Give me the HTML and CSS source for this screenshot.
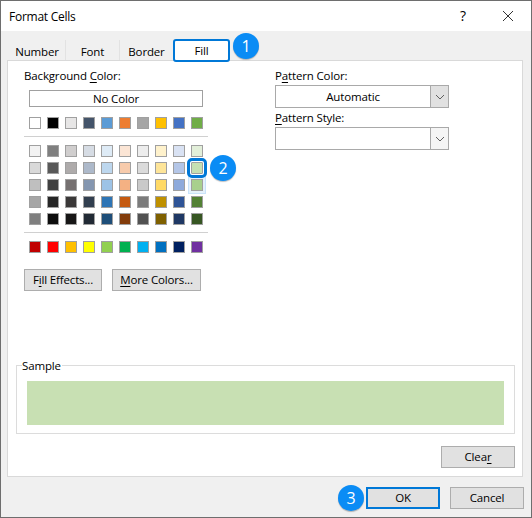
FILE: index.html
```html
<html>
<head>
    <title>Format Cells</title>
    <link rel="stylesheet" href="styles.css">
</head>
<body>
    <div class="dialog">
        <div class="titlebar">
            <div class="title">Format Cells</div>
            <div class="help">?</div>
            <svg class="close" width="12" height="12" viewBox="0 0 12 12"><path d="M1 1L11 11M11 1L1 11" stroke="#333" stroke-width="1" fill="none"/></svg>
        </div>
        <div class="tabs">
            <div class="tab tab-number">Number</div>
            <div class="tab tab-font">Font</div>
            <div class="tab tab-border">Border</div>
            <div class="tab tab-active">Fill</div>
        </div>
        <div class="panel">
            <div class="columns">
                <div class="left">
                    <div class="label">Background <u>C</u>olor:</div>
                    <div class="no-color">No Color</div>
                    <div class="swatches theme">
                        <span class="c-ffffff"></span><span class="c-000000"></span><span class="c-e7e6e6"></span><span class="c-44546a"></span><span class="c-5b9bd5"></span><span class="c-ed7d31"></span><span class="c-a5a5a5"></span><span class="c-ffc000"></span><span class="c-4472c4"></span><span class="c-70ad47"></span>
                    </div>
                    <div class="divider"></div>
                    <div class="swatches tints">
                        <span class="c-f2f2f2"></span><span class="c-7f7f7f"></span><span class="c-d0cece"></span><span class="c-d6dce4"></span><span class="c-deebf6"></span><span class="c-fbe5d5"></span><span class="c-ededed"></span><span class="c-fff2cc"></span><span class="c-d9e2f3"></span><span class="c-e2efd9"></span>
                        <span class="c-d9d9d9"></span><span class="c-595959"></span><span class="c-aeabab"></span><span class="c-adb9ca"></span><span class="c-bdd7ee"></span><span class="c-f7cbac"></span><span class="c-dbdbdb"></span><span class="c-fee599"></span><span class="c-b4c6e7"></span><span class="c-c5e0b3 selected"></span>
                        <span class="c-bfbfbf"></span><span class="c-404040"></span><span class="c-757070"></span><span class="c-8496b0"></span><span class="c-9dc3e6"></span><span class="c-f4b183"></span><span class="c-c9c9c9"></span><span class="c-ffd965"></span><span class="c-8eaadb"></span><span class="c-a8d08d hovered"></span>
                        <span class="c-a6a6a6"></span><span class="c-262626"></span><span class="c-3a3838"></span><span class="c-323f4f"></span><span class="c-2e75b5"></span><span class="c-c55a11"></span><span class="c-7b7b7b"></span><span class="c-bf9000"></span><span class="c-2f5496"></span><span class="c-538135"></span>
                        <span class="c-7f7f7f"></span><span class="c-0d0d0d"></span><span class="c-171616"></span><span class="c-222a35"></span><span class="c-1e4e79"></span><span class="c-833c0b"></span><span class="c-525252"></span><span class="c-7f6000"></span><span class="c-1f3864"></span><span class="c-375623"></span>
                    </div>
                    <div class="divider"></div>
                    <div class="swatches standard">
                        <span class="c-c00000"></span><span class="c-ff0000"></span><span class="c-ffc000"></span><span class="c-ffff00"></span><span class="c-92d050"></span><span class="c-00b050"></span><span class="c-00b0f0"></span><span class="c-0070c0"></span><span class="c-002060"></span><span class="c-7030a0"></span>
                    </div>
                    <div class="left-buttons">
                        <div class="button button-effects">F<u>i</u>ll Effects...</div>
                        <div class="button button-more"><u>M</u>ore Colors...</div>
                    </div>
                </div>
                <div class="right">
                    <div class="label">P<u>a</u>ttern Color:</div>
                    <div class="select">
                        <div class="select-value">Automatic</div>
                        <div class="select-arrow"><svg width="10" height="6" viewBox="0 0 10 6"><path d="M1 1L5 5L9 1" stroke="#606060" fill="none"/></svg></div>
                    </div>
                    <div class="label label-style"><u>P</u>attern Style:</div>
                    <div class="select">
                        <div class="select-value"></div>
                        <div class="select-arrow select-arrow-light"><svg width="10" height="6" viewBox="0 0 10 6"><path d="M1 1L5 5L9 1" stroke="#606060" fill="none"/></svg></div>
                    </div>
                </div>
            </div>
            <div class="sample">
                <div class="sample-label">Sample</div>
                <div class="sample-color"></div>
            </div>
            <div class="clear-row">
                <div class="button button-action">Clea<u>r</u></div>
            </div>
        </div>
        <div class="footer">
            <div class="button button-action button-ok">OK</div>
            <div class="button button-action">Cancel</div>
        </div>
        <div class="badge badge-1">1</div>
        <div class="badge badge-2">2</div>
        <div class="badge badge-3">3</div>
    </div>
</body>
</html>
```

FILE: styles.css
```css
body {
    margin: 0;
    padding: 0;
    font-family: "Open Sans", "Noto Sans", Arial, sans-serif;
    font-size: 11.5px;
    letter-spacing: -0.15px;
    color: #000;
}
u {
    text-underline-offset: 2px;
}
.dialog {
    position: relative;
    width: 532px;
    height: 518px;
    box-sizing: border-box;
    border: 1px solid #6e6e6e;
    background-color: #f0f0f0;
    display: flex;
    flex-direction: column;
}
.titlebar {
    height: 30px;
    background-color: #ffffff;
    display: flex;
    align-items: center;
    padding-left: 8px;
}
.title {
    font-size: 12px;
    letter-spacing: -0.25px;
    flex: 1;
}
.help {
    font-size: 14px;
    margin-right: 36px;
    margin-top: -2px;
}
.close {
    margin-right: 17px;
}
.tabs {
    display: flex;
    height: 20px;
    margin-top: 9px;
    padding-left: 8px;
}
.tab {
    box-sizing: border-box;
    display: flex;
    justify-content: center;
    align-items: center;
    border-right: 1px solid #e2e2e2;
    padding-top: 2px;
}
.tab-number {
    width: 57px;
}
.tab-font {
    width: 54px;
}
.tab-border {
    width: 53px;
    border-right: none;
}
.tab-active {
    width: 57px;
    height: 23px;
    margin-top: -1px;
    position: relative;
    z-index: 1;
    background-color: #ffffff;
    border: 2px solid #0078d7;
    border-radius: 3px;
    padding-top: 0;
    padding-bottom: 1px;
}
.panel {
    height: 417px;
    box-sizing: border-box;
    margin: 0 8px 0 6px;
    border: 1px solid #d9d9d9;
    background-color: #ffffff;
    padding: 0 7px 0 8px;
}
.columns {
    display: flex;
    height: 304px;
    padding-left: 8px;
}
.left {
    width: 251px;
    padding-top: 8px;
}
.label {
    height: 16px;
    line-height: 14px;
}
.no-color {
    width: 172px;
    height: 15px;
    line-height: 15px;
    margin: 5px 0 0 5px;
    border: 1px solid #a0a0a0;
    text-align: center;
}
.swatches {
    display: grid;
    grid-template-columns: repeat(10, 12px);
    column-gap: 6px;
    row-gap: 5px;
    margin-left: 5px;
}
.swatches span {
    box-sizing: border-box;
    width: 12px;
    height: 12px;
    border: 1px solid #a0a0a0;
}
.theme {
    margin-top: 10px;
}
.tints {
    margin-top: 8px;
}
.standard {
    margin-top: 8px;
}
.divider {
    width: 184px;
    height: 1px;
    background-color: #d0d0d0;
    margin-top: 7px;
}
.swatches .selected {
    position: relative;
    z-index: 1;
    outline: 3px solid #0078d7;
    outline-offset: 1px;
    border-radius: 1px;
}
.swatches .hovered {
    box-shadow: 0 0 0 2px #e5f1fb, 0 0 0 3px #c9e3fa;
}
.left-buttons {
    display: flex;
    gap: 10px;
    margin-top: 16px;
}
.button {
    box-sizing: border-box;
    height: 22px;
    display: flex;
    justify-content: center;
    align-items: center;
    background-color: #e1e1e1;
    border: 1px solid #adadad;
    padding-bottom: 1px;
}
.button-effects {
    width: 78px;
}
.button-more {
    width: 89px;
}
.right {
    width: 174px;
    padding-top: 8px;
}
.label-style {
    margin-top: 3px;
}
.select {
    box-sizing: border-box;
    height: 23px;
    display: flex;
    border: 1px solid #a9a9a9;
}
.select-value {
    flex: 1;
    text-align: center;
    line-height: 21px;
}
.select-arrow {
    width: 17px;
    display: flex;
    justify-content: center;
    align-items: center;
    background-color: #e1e1e1;
    border-left: 1px solid #a9a9a9;
}
.select-arrow-light {
    background-color: #f5f5f5;
}
.sample {
    position: relative;
    box-sizing: border-box;
    height: 69px;
    border: 1px solid #dcdcdc;
    padding: 15px 10px 0 10px;
}
.sample-label {
    position: absolute;
    top: -8px;
    left: 5px;
    padding-right: 1px;
    background-color: #ffffff;
}
.sample-color {
    height: 44px;
    background-color: #c8e0b3;
}
.clear-row {
    display: flex;
    justify-content: flex-end;
    margin-top: 12px;
}
.button-action {
    width: 74px;
}
.footer {
    display: flex;
    justify-content: flex-end;
    gap: 10px;
    padding: 10px 7px 0 0;
}
.button-ok {
    border: 2px solid #0078d7;
}
.badge {
    position: absolute;
    width: 26px;
    height: 26px;
    border-radius: 50%;
    background-color: #0a8cf5;
    box-shadow: 0 1px 1px rgba(0, 0, 0, 0.25);
    color: #ffffff;
    font-size: 16px;
    line-height: 26px;
    text-align: center;
    z-index: 2;
}
.badge-1 {
    left: 232px;
    top: 32px;
}
.badge-2 {
    left: 209px;
    top: 154px;
}
.badge-3 {
    left: 337px;
    top: 484px;
}
.c-ffffff { background-color: #ffffff; }
.c-000000 { background-color: #000000; }
.c-e7e6e6 { background-color: #e7e6e6; }
.c-44546a { background-color: #44546a; }
.c-5b9bd5 { background-color: #5b9bd5; }
.c-ed7d31 { background-color: #ed7d31; }
.c-a5a5a5 { background-color: #a5a5a5; }
.c-ffc000 { background-color: #ffc000; }
.c-4472c4 { background-color: #4472c4; }
.c-70ad47 { background-color: #70ad47; }
.c-f2f2f2 { background-color: #f2f2f2; }
.c-7f7f7f { background-color: #7f7f7f; }
.c-d0cece { background-color: #d0cece; }
.c-d6dce4 { background-color: #d6dce4; }
.c-deebf6 { background-color: #deebf6; }
.c-fbe5d5 { background-color: #fbe5d5; }
.c-ededed { background-color: #ededed; }
.c-fff2cc { background-color: #fff2cc; }
.c-d9e2f3 { background-color: #d9e2f3; }
.c-e2efd9 { background-color: #e2efd9; }
.c-d9d9d9 { background-color: #d9d9d9; }
.c-595959 { background-color: #595959; }
.c-aeabab { background-color: #aeabab; }
.c-adb9ca { background-color: #adb9ca; }
.c-bdd7ee { background-color: #bdd7ee; }
.c-f7cbac { background-color: #f7cbac; }
.c-dbdbdb { background-color: #dbdbdb; }
.c-fee599 { background-color: #fee599; }
.c-b4c6e7 { background-color: #b4c6e7; }
.c-c5e0b3 { background-color: #c5e0b3; }
.c-bfbfbf { background-color: #bfbfbf; }
.c-404040 { background-color: #404040; }
.c-757070 { background-color: #757070; }
.c-8496b0 { background-color: #8496b0; }
.c-9dc3e6 { background-color: #9dc3e6; }
.c-f4b183 { background-color: #f4b183; }
.c-c9c9c9 { background-color: #c9c9c9; }
.c-ffd965 { background-color: #ffd965; }
.c-8eaadb { background-color: #8eaadb; }
.c-a8d08d { background-color: #a8d08d; }
.c-a6a6a6 { background-color: #a6a6a6; }
.c-262626 { background-color: #262626; }
.c-3a3838 { background-color: #3a3838; }
.c-323f4f { background-color: #323f4f; }
.c-2e75b5 { background-color: #2e75b5; }
.c-c55a11 { background-color: #c55a11; }
.c-7b7b7b { background-color: #7b7b7b; }
.c-bf9000 { background-color: #bf9000; }
.c-2f5496 { background-color: #2f5496; }
.c-538135 { background-color: #538135; }
.c-0d0d0d { background-color: #0d0d0d; }
.c-171616 { background-color: #171616; }
.c-222a35 { background-color: #222a35; }
.c-1e4e79 { background-color: #1e4e79; }
.c-833c0b { background-color: #833c0b; }
.c-525252 { background-color: #525252; }
.c-7f6000 { background-color: #7f6000; }
.c-1f3864 { background-color: #1f3864; }
.c-375623 { background-color: #375623; }
.c-c00000 { background-color: #c00000; }
.c-ff0000 { background-color: #ff0000; }
.c-ffff00 { background-color: #ffff00; }
.c-92d050 { background-color: #92d050; }
.c-00b050 { background-color: #00b050; }
.c-00b0f0 { background-color: #00b0f0; }
.c-0070c0 { background-color: #0070c0; }
.c-002060 { background-color: #002060; }
.c-7030a0 { background-color: #7030a0; }
```
